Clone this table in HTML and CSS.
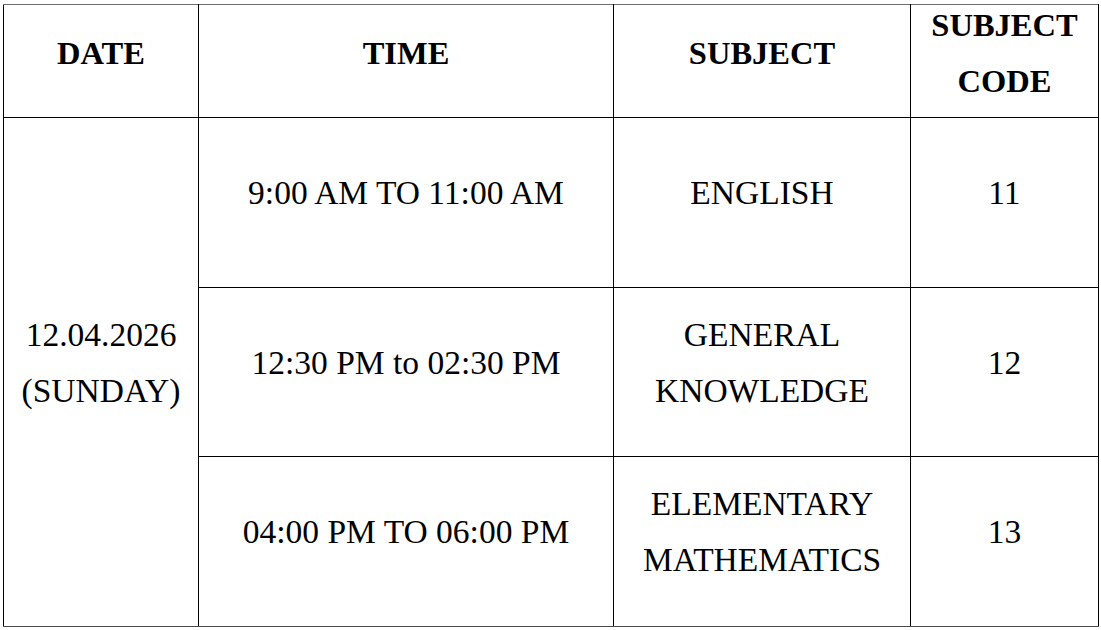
FILE: index.html
```html
<!DOCTYPE html>
<html lang="en">
<head>
<meta charset="utf-8">
<title>Exam Schedule</title>
<link rel="stylesheet" href="styles.css">
</head>
<body>
<table class="schedule">
  <colgroup>
    <col class="c-date">
    <col class="c-time">
    <col class="c-subject">
    <col class="c-code">
  </colgroup>
  <thead>
    <tr class="head-row">
      <th><div class="txt">DATE</div></th>
      <th><div class="txt">TIME</div></th>
      <th><div class="txt">SUBJECT</div></th>
      <th><div class="txt">SUBJECT<br>CODE</div></th>
    </tr>
  </thead>
  <tbody>
    <tr class="row-a">
      <td rowspan="3"><div class="txt">12.04.2026<br>(SUNDAY)</div></td>
      <td><div class="txt">9:00 AM TO 11:00 AM</div></td>
      <td><div class="txt">ENGLISH</div></td>
      <td><div class="txt">11</div></td>
    </tr>
    <tr class="row-b">
      <td><div class="txt">12:30 PM to 02:30 PM</div></td>
      <td><div class="txt">GENERAL<br>KNOWLEDGE</div></td>
      <td><div class="txt">12</div></td>
    </tr>
    <tr class="row-c">
      <td><div class="txt">04:00 PM TO 06:00 PM</div></td>
      <td><div class="txt">ELEMENTARY<br>MATHEMATICS</div></td>
      <td><div class="txt">13</div></td>
    </tr>
  </tbody>
</table>
</body>
</html>
```
FILE: styles.css
```css
html, body {
  margin: 0;
  padding: 0;
  background: #ffffff;
}

body {
  font-family: "Liberation Serif", "Times New Roman", serif;
  color: #000;
}

.schedule {
  margin: 4px 0 0 3px;
  border-collapse: collapse;
  table-layout: fixed;
  width: 1096px;
}

.c-date { width: 195px; }
.c-time { width: 415px; }
.c-subject { width: 297px; }
.c-code { width: 188px; }

.schedule th,
.schedule td {
  border: 1px solid #000;
  padding: 0;
  text-align: center;
  vertical-align: middle;
  line-height: 56px;
  overflow: hidden;
}

.schedule thead th {
  border-top: 1px solid #6e6e6e;
  font-weight: bold;
  font-size: 32.5px;
}

.schedule tbody tr:last-child td,
.schedule tbody td[rowspan] {
  border-bottom-color: #4a4a4a;
}

.schedule td {
  font-weight: normal;
  font-size: 33.5px;
}

.head-row { height: 113px; }
.row-a { height: 170px; }
.row-b { height: 169px; }
.row-c { height: 170px; }

.txt {
  margin-top: -16px;
}

.schedule td .txt {
  margin-top: -19px;
}
```
